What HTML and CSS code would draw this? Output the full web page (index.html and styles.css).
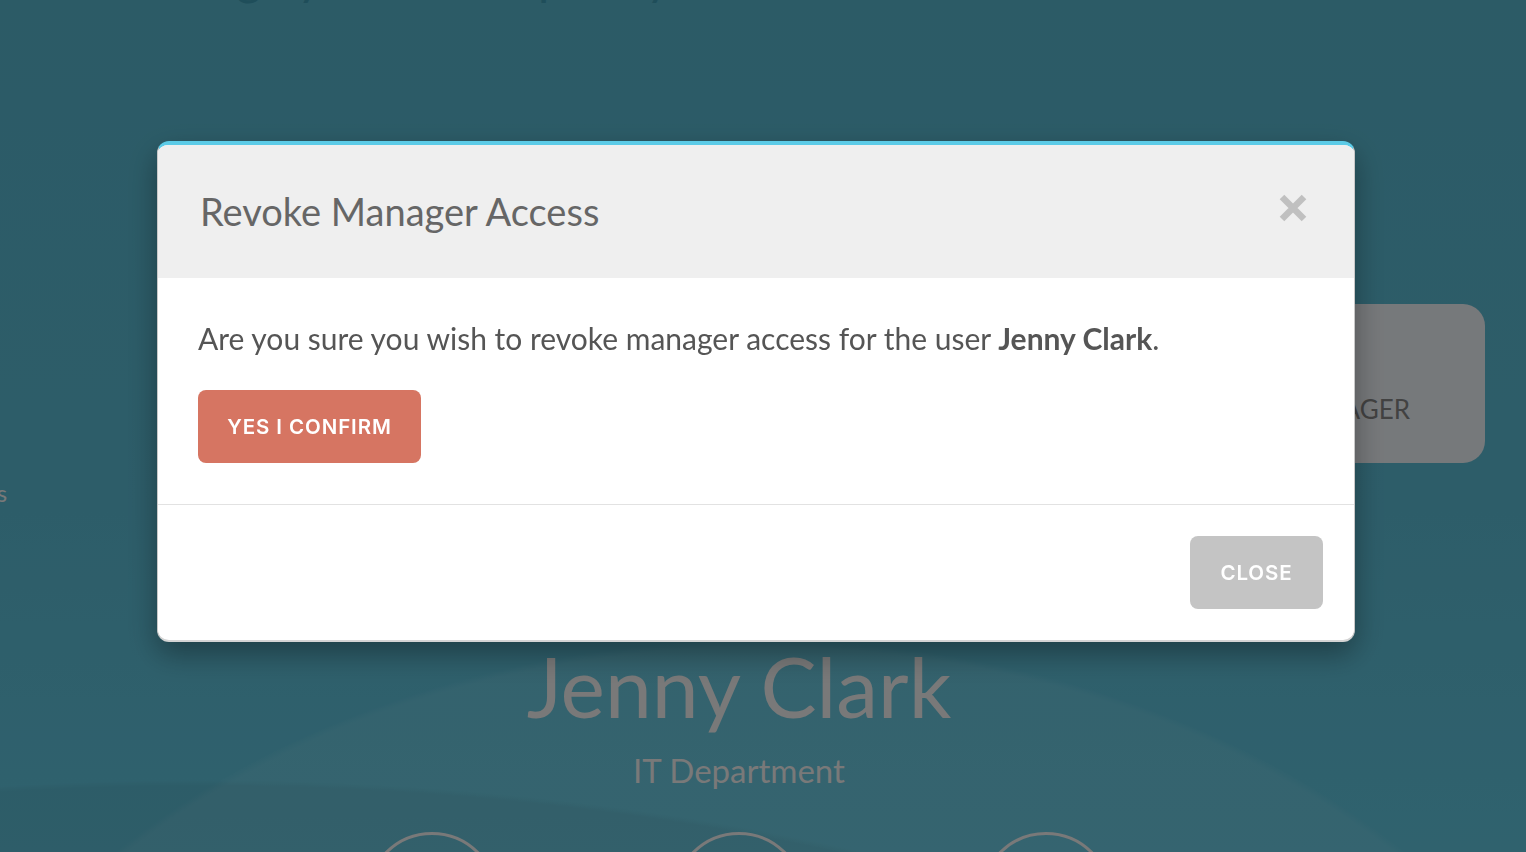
FILE: index.html
```html
<!DOCTYPE html>
<html lang="en">
<head>
    <meta charset="UTF-8">
    <meta name="viewport" content="width=device-width, initial-scale=1.0">
    <title>Team Members</title>
    <link rel="stylesheet" href="styles.css">
</head>
<body>
    <div class="page">
        <h1 class="page-heading">Manage your team quickly</h1>
        <div class="page-side">Users</div>
        <div class="role-card">MANAGER</div>
        <div class="profile">
            <div class="profile-name">Jenny Clark</div>
            <div class="profile-dept">IT Department</div>
            <div class="profile-actions">
                <span class="ring"></span>
                <span class="ring"></span>
                <span class="ring"></span>
            </div>
        </div>
    </div>

    <div class="backdrop">
        <div class="modal">
            <div class="modal-header">
                <h2 class="modal-title">Revoke Manager Access</h2>
                <button class="modal-x" type="button" aria-label="Close">
                    <svg width="28" height="28" viewBox="0 0 28 28">
                        <path d="M3 3 L25 25 M25 3 L3 25" stroke="#c0c0c0" stroke-width="6.5" stroke-linecap="butt"/>
                    </svg>
                </button>
            </div>
            <div class="modal-body">
                <p>Are you sure you wish to revoke manager access for the user <strong>Jenny Clark</strong>.</p>
                <button class="btn btn-confirm" type="button">YES I CONFIRM</button>
            </div>
            <div class="modal-footer">
                <button class="btn btn-close" type="button">CLOSE</button>
            </div>
        </div>
    </div>
</body>
</html>
```

FILE: styles.css
```css
html, body {
    margin: 0;
    padding: 0;
    height: 100%;
    overflow: hidden;
}
body {
    font-family: Lato, "Open Sans", sans-serif;
    background-color: #52a9bf;
}
.page {
    position: relative;
    height: 852px;
    overflow: hidden;
    background:
        radial-gradient(ellipse 900px 700px at 760px 1340px, rgba(255,255,255,0.06) 0, rgba(255,255,255,0.06) 99%, transparent 100%),
        radial-gradient(ellipse 1400px 600px at 200px 1380px, rgba(0,0,0,0.05) 0, rgba(0,0,0,0.05) 99%, transparent 100%),
        linear-gradient(180deg, #50a6bb 0%, #53aac0 60%, #58b3c9 100%);
}
.page-heading {
    margin: 0;
    position: absolute;
    top: -52px;
    left: 118px;
    font-size: 48px;
    line-height: 58px;
    font-weight: 400;
    color: #3a8ea4;
}
.page-side {
    position: absolute;
    top: 478px;
    left: -52px;
    font-size: 24px;
    color: #dcdcdc;
}
.role-card {
    position: absolute;
    top: 304px;
    left: 1180px;
    width: 305px;
    height: 159px;
    border-radius: 22px;
    background-color: #d8dce0;
    color: #787878;
    font-size: 26px;
    display: flex;
    align-items: center;
    justify-content: center;
    padding: 50px 0 0 26px;
    box-sizing: border-box;
}
.profile {
    position: absolute;
    top: 636px;
    left: 0;
    width: 1478px;
    display: flex;
    flex-direction: column;
    align-items: center;
}
.profile-name {
    font-size: 84px;
    line-height: 100px;
    color: #dcdcdc;
}
.profile-dept {
    margin-top: 14px;
    font-size: 33px;
    color: #dcdcdc;
}
.profile-actions {
    margin-top: 42px;
    display: flex;
    gap: 175px;
}
.ring {
    width: 126px;
    height: 126px;
    border: 3px solid #dcdcdc;
    border-radius: 50%;
}

.backdrop {
    position: fixed;
    inset: 0;
    background-color: rgba(0, 0, 0, 0.45);
}
.modal {
    margin: 141px 0 0 157px;
    width: 1198px;
    box-sizing: border-box;
    background-color: #fff;
    border: 1px solid #c8c8c8;
    border-top: 4px solid #5ccbe7;
    border-bottom: 2px solid #d4d4d4;
    border-radius: 12px;
    overflow: hidden;
    box-shadow: 0 12px 30px rgba(0, 0, 0, 0.35);
}
.modal-header {
    background-color: #efefef;
    height: 133px;
    padding: 0 47px 0 42px;
    display: flex;
    align-items: center;
    justify-content: space-between;
}
.modal-title {
    margin: 0;
    font-size: 38px;
    font-weight: 400;
    color: #666;
    padding-bottom: 2px;
}
.modal-x {
    background: none;
    border: 0;
    padding: 0 0 8px;
    display: flex;
    cursor: pointer;
}
.modal-body {
    padding: 40px 40px 41px;
    border-bottom: 1px solid #e2e2e2;
}
.modal-body p {
    margin: 0 0 32px;
    font-size: 30px;
    line-height: 40px;
    color: #555;
}
.modal-body strong {
    font-weight: 700;
}
.btn {
    font-family: Inter, "Liberation Sans", sans-serif;
    font-size: 20.5px;
    font-weight: 600;
    letter-spacing: 0.9px;
    color: #fff;
    border: 0;
    border-radius: 8px;
    height: 73px;
    cursor: pointer;
}
.btn-confirm {
    width: 223px;
    background-color: #d67562;
}
.btn-close {
    width: 133px;
    background-color: #c4c4c4;
}
.modal-footer {
    padding: 31px 31px 31px;
    display: flex;
    justify-content: flex-end;
}
```
